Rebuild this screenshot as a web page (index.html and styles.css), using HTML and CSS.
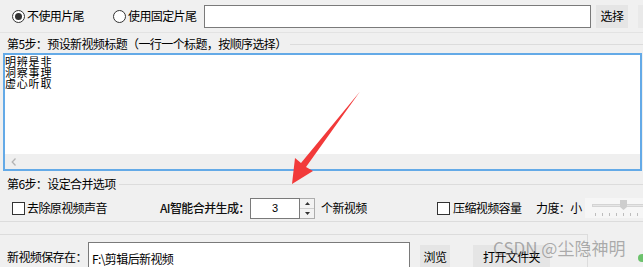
FILE: index.html
```html
<!DOCTYPE html>
<html lang="zh-CN">
<head>
<meta charset="utf-8">
<title>视频合并设置</title>
<link rel="stylesheet" href="styles.css">
</head>
<body>
<div class="page">
  <div class="top">
    <div class="radio-item r1"><span class="radio on"></span><span class="t">不使用片尾</span></div>
    <div class="radio-item r2"><span class="radio"></span><span class="t">使用固定片尾</span></div>
    <div class="input top-input"></div>
    <div class="btn sel"><span class="t">选择</span></div>
    <div class="btn stub"></div>
  </div>

  <div class="legend l5"><span class="t">第5步：预设新视频标题（一行一个标题，按顺序选择）</span><i class="rule"></i></div>

  <div class="memo">
    <div class="memo-text"><div>明辨是非</div><div>洞察事理</div><div>虚心听取</div></div>
    <div class="hscroll">
      <svg class="hs-arrow" width="6" height="8" viewBox="0 0 6 8"><path d="M4.5 0.5 L1.2 4 L4.5 7.5" fill="none" stroke="#b4b4b4" stroke-width="1.3"/></svg>
    </div>
  </div>

  <div class="legend l6"><span class="t">第6步：设定合并选项</span><i class="rule"></i></div>

  <div class="opts">
    <span class="check"></span>
    <span class="t w-mute">去除原视频声音</span>
    <span class="t w-ai">AI智能合并生成：</span>
    <div class="spin">
      <div class="input spin-input">3</div>
      <div class="spin-btns">
        <div class="spin-btn"><svg width="5" height="3" viewBox="0 0 5 3"><path d="M0 3 L2.5 0 L5 3Z" fill="#333"/></svg></div>
        <div class="spin-btn"><svg width="5" height="3" viewBox="0 0 5 3"><path d="M0 0 L2.5 3 L5 0Z" fill="#333"/></svg></div>
      </div>
    </div>
    <span class="t w-count">个新视频</span>
    <span class="check"></span>
    <span class="t w-comp">压缩视频容量</span>
    <span class="t w-force">力度：小</span>
    <div class="slider">
      <div class="track"></div>
      <div class="thumb"></div>
      <div class="ticks"></div>
    </div>
  </div>

  <div class="save">
    <span class="t w-save">新视频保存在：</span>
    <div class="input save-input"><span class="t path">F:\剪辑后新视频</span></div>
    <div class="btn browse"><span class="t">浏览</span></div>
    <div class="btn open"><span class="t">打开文件夹</span></div>
  </div>
</div>

<svg class="arrow" width="643" height="267" viewBox="0 0 643 267">
  <polygon points="360,91.5 306,167 313,171 292,184 295,158 301,163" fill="#f23a3a"/>
</svg>
<div class="watermark">CSDN @尘隐神明</div>
<div class="dot"></div>
</body>
</html>
```

FILE: styles.css
```css
* { box-sizing: border-box; margin: 0; padding: 0; }

html, body {
  width: 643px;
  height: 267px;
  overflow: hidden;
  background: #f0f0f0;
}

body {
  font-family: "Noto Sans CJK SC", "Microsoft YaHei", sans-serif;
  font-size: 12px;
  color: #000;
  position: relative;
}

.t {
  letter-spacing: -0.6px;
  white-space: nowrap;
  line-height: 14px;
}

.input {
  background: #fff;
  border: 1px solid #7a7a7a;
}

.btn {
  background: #e5e5e5;
  display: flex;
  align-items: center;
  justify-content: center;
}

/* top row */
.top {
  height: 33px;
  display: flex;
  align-items: center;
  padding-left: 12px;
  border-bottom: 1px solid #e3e3e3;
}

.radio-item {
  display: flex;
  align-items: center;
  gap: 2px;
  flex: none;
}

.r1 { width: 101px; }
.r2 { width: 91px; }

.radio {
  width: 13px;
  height: 13px;
  border: 1px solid #333;
  border-radius: 50%;
  background: #fff;
  display: flex;
  align-items: center;
  justify-content: center;
  flex: none;
}

.radio.on::after {
  content: "";
  width: 7px;
  height: 7px;
  border-radius: 50%;
  background: #333;
}

.top-input {
  width: 387px;
  height: 23px;
  flex: none;
}

.sel {
  margin-left: 5px;
  width: 32px;
  height: 23px;
  flex: none;
}

.stub {
  margin-left: 10px;
  width: 10px;
  height: 23px;
  flex: none;
  background: #e9e9e9;
}

/* group legends */
.legend {
  display: flex;
  align-items: center;
  padding-left: 7px;
}

.l5 { height: 20px; padding-top: 2px; }
.l6 { height: 24px; padding-top: 2px; }

.legend .rule {
  flex: 1;
  height: 1px;
  background: #dcdcdc;
  margin-left: 3px;
}

/* memo */
.memo {
  margin-left: 3px;
  width: 639px;
  height: 118px;
  border: 2px solid #64aae7;
  background: #fff;
  display: flex;
  flex-direction: column;
}

.memo-text {
  height: 99px;
  padding-top: 1px;
  font-size: 11px;
  line-height: 11px;
  letter-spacing: 0.8px;
  white-space: nowrap;
}

.memo-text div { height: 11px; }

.hscroll {
  height: 15px;
  background: #efefef;
  display: flex;
  align-items: center;
  padding-left: 6px;
}

/* options row */
.opts {
  height: 27px;
  display: flex;
  align-items: center;
  padding-left: 12px;
  border-bottom: 1px solid #dcdcdc;
}

.check {
  width: 13px;
  height: 13px;
  border: 1px solid #333;
  background: #fff;
  flex: none;
}

.w-mute { width: 133px; margin-left: 2px; flex: none; }
.w-ai { width: 90px; flex: none; font-weight: 500; color: #111; }
.w-count { width: 116px; margin-left: 6px; flex: none; }
.w-comp { width: 83px; margin-left: 3px; flex: none; }
.w-force { width: 49px; flex: none; }

.spin {
  display: flex;
  flex: none;
}

.spin-input {
  width: 50px;
  height: 21px;
  display: flex;
  align-items: center;
  justify-content: center;
  font-family: "Liberation Sans", sans-serif;
  font-size: 11px;
}

.spin-btns {
  width: 15px;
  height: 21px;
  display: flex;
  flex-direction: column;
  border: 1px solid #adadad;
  border-left: none;
  background: #f3f3f3;
}

.spin-btn {
  flex: 1;
  display: flex;
  align-items: center;
  justify-content: center;
}

.spin-btn + .spin-btn { border-top: 1px solid #cfcfcf; }

.slider {
  width: 70px;
  height: 20px;
  background: #f6f6f6;
  position: relative;
  flex: none;
}

.track {
  position: absolute;
  left: 7px;
  right: 0;
  top: 6px;
  height: 3px;
  background: #e6e6e6;
  border: 1px solid #d4d4d4;
}

.thumb {
  position: absolute;
  left: 35px;
  top: 2px;
  width: 7px;
  height: 10px;
  background: #cdcdcd;
  clip-path: polygon(0 0, 100% 0, 100% 70%, 50% 100%, 0 70%);
}

.ticks {
  position: absolute;
  left: 10px;
  right: 0;
  top: 15px;
  height: 3px;
  background: repeating-linear-gradient(to right, #bdbdbd 0 1px, transparent 1px 7px);
}

/* save row */
.save {
  margin-top: 12px;
  width: 588px;
  height: 40px;
  border-top: 1px solid #dcdcdc;
  border-right: 1px solid #dcdcdc;
  display: flex;
  align-items: flex-start;
  padding-left: 7px;
  padding-top: 7px;
}

.w-save {
  width: 81px;
  flex: none;
  margin-top: 8px;
}

.save-input {
  width: 322px;
  height: 32px;
  flex: none;
  padding: 7px 0 0 3px;
}

.path { font-size: 12px; }

.browse {
  margin-left: 10px;
  margin-top: 3px;
  width: 30px;
  height: 28px;
  align-items: flex-start;
  padding-top: 5px;
  flex: none;
}

.open {
  margin-left: 23px;
  margin-top: 3px;
  width: 77px;
  height: 28px;
  align-items: flex-start;
  padding-top: 5px;
  flex: none;
}

/* overlays */
.arrow {
  position: absolute;
  left: 0;
  top: 0;
  pointer-events: none;
}

.watermark {
  position: absolute;
  left: 493px;
  top: 237px;
  font-family: "Noto Sans CJK SC", sans-serif;
  font-size: 17px;
  line-height: 22px;
  color: rgba(110, 110, 110, 0.55);
  white-space: nowrap;
}

.dot {
  position: absolute;
  left: 638px;
  top: 254px;
  width: 8px;
  height: 8px;
  border-radius: 50%;
  background: #6cc26c;
}
```
